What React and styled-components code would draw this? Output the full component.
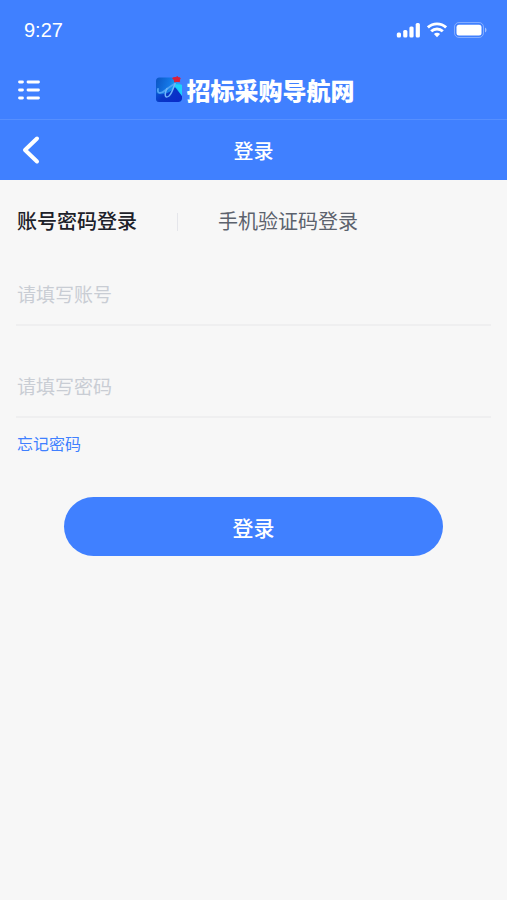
import React, { useState } from "react";
import styled, { createGlobalStyle } from "styled-components";

const GlobalStyle = createGlobalStyle`
  * {
    box-sizing: border-box;
  }

  body {
    margin: 0;
    background: #f7f7f7;
    font-family: "Liberation Sans", "Noto Sans CJK SC", sans-serif;
  }

  button,
  input {
    font-family: inherit;
  }
`;

const Header = styled.header`
  background: #4080ff;
  color: white;
`;

const StatusBar = styled.div`
  display: flex;
  align-items: center;
  justify-content: space-between;
  height: 60px;
  padding: 0 20px 0 24px;
`;

const Time = styled.span`
  font-family: "Liberation Sans", sans-serif;
  font-size: 20px;
`;

const StatusIcons = styled.div`
  display: flex;
  align-items: center;
  gap: 7px;

  svg {
    display: block;
  }
`;

const Bar = styled.div`
  display: grid;
  grid-template-columns: 48px 1fr 48px;
  align-items: center;
  height: 60px;
  padding: 0 12px;
  border-bottom: ${props => (props.$divided ? "1px solid #568fff" : "none")};
`;

const IconButton = styled.button`
  display: flex;
  align-items: center;
  width: 36px;
  height: 40px;
  padding: 0 0 0 5px;
  border: 0;
  background: none;
  color: white;
  cursor: pointer;
`;

const Brand = styled.a`
  display: flex;
  align-items: center;
  justify-content: center;
  gap: 4px;
  padding-left: 2px;
  color: white;
  font-size: 24px;
  font-weight: 900;
  line-height: 28px;
  text-decoration: none;
  white-space: nowrap;
`;

const BrandName = styled.span`
  padding-top: 4px;
`;

const Title = styled.h1`
  margin: 0;
  padding-top: 4px;
  font-size: 20px;
  font-weight: 500;
  line-height: 28px;
  text-align: center;
`;

const Main = styled.main`
  padding: 26px 16px;
`;

const Tabs = styled.div`
  display: flex;
  align-items: center;
  gap: 40px;
  padding-left: 1px;
`;

const Tab = styled.button`
  padding: 0;
  border: 0;
  background: none;
  color: ${props => (props.$active ? "#1d2129" : "#5c626d")};
  font-size: 20px;
  font-weight: ${props => (props.$active ? 500 : 400)};
  line-height: 32px;
  white-space: nowrap;
  cursor: pointer;
`;

const Divider = styled.span`
  width: 1px;
  height: 18px;
  background: #e5e6eb;
`;

const Form = styled.form`
  display: flex;
  flex-direction: column;
  padding-top: 28px;
`;

const Input = styled.input`
  width: 100%;
  height: 60px;
  margin-bottom: 32px;
  padding: 2px 0 0 1px;
  border: 0;
  border-bottom: 2px solid #efeff0;
  border-radius: 0;
  background: none;
  color: #1d2129;
  font-size: 19px;
  outline: 0;

  &::placeholder {
    color: #c9cdd4;
    opacity: 1;
  }

  &:focus {
    border-bottom-color: #4080ff;
  }
`;

const ForgotLink = styled.a`
  align-self: flex-start;
  margin-top: -17px;
  padding-left: 1px;
  color: #4080ff;
  font-size: 16px;
  line-height: 24px;
  text-decoration: none;
`;

const SubmitButton = styled.button`
  height: 59px;
  margin: 40px 48px 0;
  border: 0;
  border-radius: 30px;
  background: #4080ff;
  color: white;
  font-size: 21px;
  font-weight: 500;
  cursor: pointer;
`;

const SignalIcon = () => (
  <svg width="24" height="16" viewBox="0 0 24 16" fill="white" aria-hidden="true">
    <rect x="0.8" y="10.5" width="4.2" height="5" rx="1.5" />
    <rect x="7.2" y="8" width="4.2" height="7.5" rx="1.5" />
    <rect x="13.4" y="4.5" width="4.2" height="11" rx="1.5" />
    <rect x="19.7" y="1" width="4.2" height="14.5" rx="1.5" />
  </svg>
);

const WifiIcon = () => (
  <svg width="20" height="16" viewBox="0 0 20 16" aria-hidden="true">
    <g fill="none" stroke="white" strokeWidth="2.9">
      <path d="M0.9 5.5C6 0.6 14 0.6 19.1 5.5" />
      <path d="M4.2 9.3C7.5 6.2 12.5 6.2 15.8 9.3" />
    </g>
    <path d="M6.9 12.1C8.7 10.4 11.3 10.4 13.1 12.1L10 15.3Z" fill="white" />
  </svg>
);

const BatteryIcon = () => (
  <svg width="33" height="16" viewBox="0 0 33 16" aria-hidden="true">
    <rect x="0.5" y="0.5" width="29" height="15" rx="4.5" fill="none" stroke="white" strokeOpacity="0.35" />
    <rect x="2.5" y="2.8" width="25" height="10.7" rx="2.5" fill="white" />
    <path d="M31 5.5C33 6.5 33 9.5 31 10.5Z" fill="white" fillOpacity="0.5" />
  </svg>
);

const MenuIcon = () => (
  <svg width="24" height="20" viewBox="0 0 24 20" aria-hidden="true">
    <path
      d="M2.5 2H5.5M11 2H21.5M2.5 10H5.5M11 10H21.5M2.5 18H5.5M11 18H21.5"
      stroke="white"
      strokeWidth="2.8"
      strokeLinecap="round"
    />
  </svg>
);

const BackIcon = () => (
  <svg width="24" height="30" viewBox="0 0 24 30" aria-hidden="true">
    <path
      d="M20 3.5L8 15L20 26.5"
      fill="none"
      stroke="white"
      strokeWidth="4"
      strokeLinecap="round"
      strokeLinejoin="round"
    />
  </svg>
);

const Logo = () => (
  <svg width="28" height="28" viewBox="0 0 28 28" aria-hidden="true">
    <defs>
      <linearGradient id="logoTop" x1="0" y1="0" x2="1" y2="0.3">
        <stop offset="0" stopColor="#0b55c4" />
        <stop offset="0.55" stopColor="#1479e8" />
        <stop offset="1" stopColor="#19cdfb" />
      </linearGradient>
      <linearGradient id="logoBottom" x1="0" y1="0" x2="1" y2="0.6">
        <stop offset="0" stopColor="#0a63dc" />
        <stop offset="0.5" stopColor="#0837c6" />
        <stop offset="1" stopColor="#0a2cc9" />
      </linearGradient>
    </defs>
    <path d="M1 5Q1 1.5 4.5 1.5H17L21 6L27 9V23Q26.5 26 23.5 26H4.5Q1 26 1 22.5Z" fill="url(#logoTop)" />
    <path d="M1 17C8 20 15 17 20 11L27 20V23Q26.5 26 23.5 26H4.5Q1 26 1 22.5Z" fill="url(#logoBottom)" />
    <path d="M20 8L27 9V20C26 16 23.5 13 20 11Z" fill="#1bd1fc" />
    <path
      d="M3 13C2 18 6 18 10 14.5C13 12 16 10 20 7.5"
      fill="none"
      stroke="#4fa3f5"
      strokeWidth="1.8"
      strokeLinecap="round"
    />
    <path
      d="M12 12.5C9 19 10 23 14 20C17 17.5 18.5 12 20 7.5"
      fill="none"
      stroke="#6fb4fa"
      strokeWidth="1.5"
      strokeLinecap="round"
    />
    <path
      d="M17.5 2L21 1.4L22.5 0.6L23.5 1.6L25.2 2L24.5 4L24.6 5.6L22 5.4L19.5 6L19.3 4Z"
      fill="#dc1f3a"
      stroke="#dc1f3a"
      strokeLinejoin="round"
    />
  </svg>
);

const App = () => {
  const [mode, setMode] = useState("password");

  const handleSubmit = e => {
    e.preventDefault();
  };

  return (
    <>
      <GlobalStyle />
      <Header>
        <StatusBar>
          <Time>9:27</Time>
          <StatusIcons>
            <SignalIcon />
            <WifiIcon />
            <BatteryIcon />
          </StatusIcons>
        </StatusBar>
        <Bar $divided>
          <IconButton type="button" aria-label="菜单">
            <MenuIcon />
          </IconButton>
          <Brand href="#">
            <Logo />
            <BrandName>招标采购导航网</BrandName>
          </Brand>
        </Bar>
        <Bar>
          <IconButton type="button" aria-label="返回">
            <BackIcon />
          </IconButton>
          <Title>登录</Title>
        </Bar>
      </Header>
      <Main>
        <Tabs>
          <Tab type="button" $active={mode === "password"} onClick={() => setMode("password")}>
            账号密码登录
          </Tab>
          <Divider />
          <Tab type="button" $active={mode === "phone"} onClick={() => setMode("phone")}>
            手机验证码登录
          </Tab>
        </Tabs>
        <Form onSubmit={handleSubmit}>
          <Input type="text" name="account" placeholder="请填写账号" aria-label="账号" />
          <Input type="password" name="password" placeholder="请填写密码" aria-label="密码" />
          <ForgotLink href="#">忘记密码</ForgotLink>
          <SubmitButton type="submit">登录</SubmitButton>
        </Form>
      </Main>
    </>
  );
};

export default App;
